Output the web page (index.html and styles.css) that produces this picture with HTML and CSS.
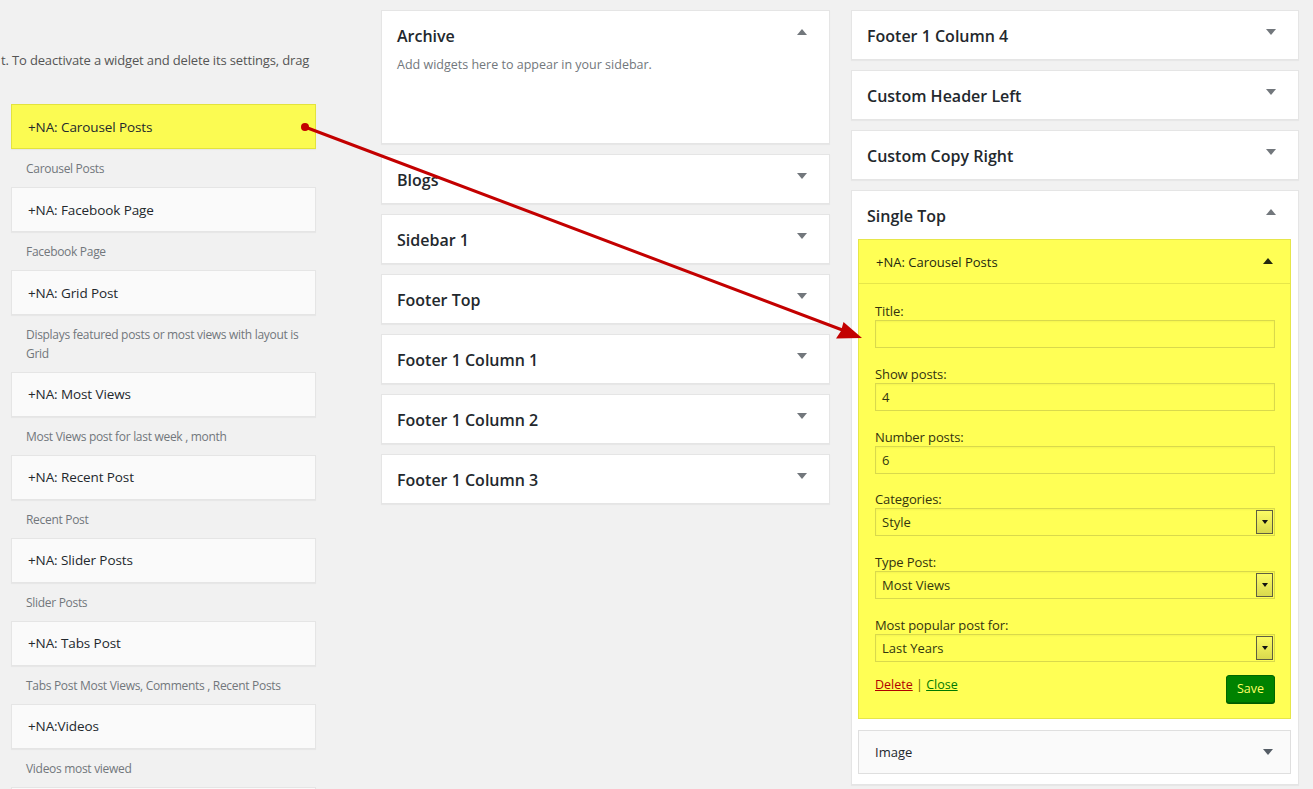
FILE: index.html
```html
<!DOCTYPE html>
<html lang="en">
<head>
<meta charset="utf-8">
<title>Widgets</title>
<link rel="stylesheet" href="styles.css">
</head>
<body>
<div class="page">
  <div class="col-left">
    <p class="intro">t. To deactivate a widget and delete its settings, drag</p>
    <div class="widget-list">
      <div class="avail highlight"><span class="avail-title">+NA: Carousel Posts</span></div>
      <p class="avail-desc">Carousel Posts</p>
      <div class="avail"><span class="avail-title">+NA: Facebook Page</span></div>
      <p class="avail-desc">Facebook Page</p>
      <div class="avail"><span class="avail-title">+NA: Grid Post</span></div>
      <p class="avail-desc">Displays featured posts or most views with layout is Grid</p>
      <div class="avail"><span class="avail-title">+NA: Most Views</span></div>
      <p class="avail-desc">Most Views post for last week , month</p>
      <div class="avail"><span class="avail-title">+NA: Recent Post</span></div>
      <p class="avail-desc">Recent Post</p>
      <div class="avail"><span class="avail-title">+NA: Slider Posts</span></div>
      <p class="avail-desc">Slider Posts</p>
      <div class="avail"><span class="avail-title">+NA: Tabs Post</span></div>
      <p class="avail-desc">Tabs Post Most Views, Comments , Recent Posts</p>
      <div class="avail"><span class="avail-title">+NA:Videos</span></div>
      <p class="avail-desc">Videos most viewed</p>
      <div class="avail"></div>
    </div>
  </div>

  <div class="col-mid">
    <div class="sidebar sidebar-open archive">
      <div class="sb-head"><h2>Archive</h2><span class="tri up"></span></div>
      <p class="sb-desc">Add widgets here to appear in your sidebar.</p>
    </div>
    <div class="sidebar"><div class="sb-head"><h2>Blogs</h2><span class="tri down"></span></div></div>
    <div class="sidebar"><div class="sb-head"><h2>Sidebar 1</h2><span class="tri down"></span></div></div>
    <div class="sidebar"><div class="sb-head"><h2>Footer Top</h2><span class="tri down"></span></div></div>
    <div class="sidebar"><div class="sb-head"><h2>Footer 1 Column 1</h2><span class="tri down"></span></div></div>
    <div class="sidebar"><div class="sb-head"><h2>Footer 1 Column 2</h2><span class="tri down"></span></div></div>
    <div class="sidebar"><div class="sb-head"><h2>Footer 1 Column 3</h2><span class="tri down"></span></div></div>
  </div>

  <div class="col-right">
    <div class="sidebar"><div class="sb-head"><h2>Footer 1 Column 4</h2><span class="tri down"></span></div></div>
    <div class="sidebar"><div class="sb-head"><h2>Custom Header Left</h2><span class="tri down"></span></div></div>
    <div class="sidebar"><div class="sb-head"><h2>Custom Copy Right</h2><span class="tri down"></span></div></div>
    <div class="sidebar single-top">
      <div class="sb-head"><h2>Single Top</h2><span class="tri up"></span></div>
      <div class="widget-open">
        <div class="wo-head"><span class="wo-title">+NA: Carousel Posts</span><span class="tri up dark"></span></div>
        <div class="wo-body">
          <div class="field">
            <label class="f-label">Title:</label>
            <div class="f-input"></div>
          </div>
          <div class="field">
            <label class="f-label">Show posts:</label>
            <div class="f-input">4</div>
          </div>
          <div class="field">
            <label class="f-label">Number posts:</label>
            <div class="f-input">6</div>
          </div>
          <div class="field">
            <label class="f-label">Categories:</label>
            <div class="f-input f-select">Style<span class="sel-btn"><span class="sel-tri"></span></span></div>
          </div>
          <div class="field">
            <label class="f-label">Type Post:</label>
            <div class="f-input f-select">Most Views<span class="sel-btn"><span class="sel-tri"></span></span></div>
          </div>
          <div class="field field-last">
            <label class="f-label">Most popular post for:</label>
            <div class="f-input f-select">Last Years<span class="sel-btn"><span class="sel-tri"></span></span></div>
          </div>
          <div class="controls">
            <div class="links"><a class="del" href="#">Delete</a> <span class="sep">|</span> <a class="close" href="#">Close</a></div>
            <span class="save">Save</span>
          </div>
        </div>
      </div>
      <div class="widget-closed"><span class="wc-title">Image</span><span class="tri down"></span></div>
    </div>
  </div>
</div>

<svg class="pointer" width="1313" height="789" viewBox="0 0 1313 789" aria-hidden="true">
  <line x1="305" y1="127" x2="845" y2="331" stroke="#c30000" stroke-width="3" stroke-linecap="round"/>
  <circle cx="305" cy="127" r="4" fill="#c30000"/>
  <polygon points="862,338 836,338.5 841,331 843.5,322" fill="#c30000"/>
</svg>
</body>
</html>
```

FILE: styles.css
```css
* { box-sizing: border-box; }

html, body {
  margin: 0;
  padding: 0;
  background: #f1f1f1;
  font-family: "Open Sans", "Noto Sans", sans-serif;
  color: #23282d;
  overflow: hidden;
}

.page {
  display: flex;
  align-items: flex-start;
  padding-top: 10px;
  height: 789px;
  overflow: hidden;
}

/* ---------- left column ---------- */
.col-left {
  width: 316px;
  flex: none;
}

.intro {
  margin: 41px 0 0 1px;
  font-size: 13px;
  line-height: 18px;
  color: #555;
  white-space: nowrap;
  letter-spacing: -0.15px;
}

.widget-list {
  margin: 35px 0 0 11px;
}

.avail {
  height: 45px;
  background: #fafafa;
  border: 1px solid #e5e5e5;
  box-shadow: 0 1px 1px rgba(0,0,0,.04);
  padding: 0 16px;
  display: flex;
  align-items: center;
}

.avail.highlight {
  background: #fbfb52;
  border-color: #e3e33c;
}

.avail-title {
  font-size: 13.5px;
  font-weight: 500;
  color: #23282d;
  letter-spacing: -0.1px;
}

.avail-desc {
  margin: 0;
  padding: 11px 6px 8.5px 15px;
  font-size: 12px;
  line-height: 18.5px;
  color: #72777c;
  letter-spacing: -0.3px;
}

/* ---------- sidebars ---------- */
.col-mid {
  width: 449px;
  flex: none;
  margin-left: 65px;
  display: flex;
  flex-direction: column;
  gap: 10px;
}

.col-right {
  width: 448px;
  flex: none;
  margin-left: 21px;
  display: flex;
  flex-direction: column;
  gap: 10px;
}

.sidebar {
  background: #fff;
  border: 1px solid #e5e5e5;
  box-shadow: 0 1px 1px rgba(0,0,0,.04);
}

.sb-head {
  height: 48px;
  padding: 15px 22px 0 15px;
  display: flex;
  justify-content: space-between;
  align-items: flex-start;
}

.sb-head h2 {
  margin: 0;
  font-size: 16px;
  line-height: 20px;
  font-weight: 600;
  color: #23282d;
}

.archive {
  height: 134px;
}

.archive .sb-head {
  height: auto;
}

.sb-desc {
  margin: 10px 0 0 15px;
  font-size: 12.5px;
  line-height: 18px;
  color: #72777c;
}

.tri {
  width: 0;
  height: 0;
  border-left: 5px solid transparent;
  border-right: 5px solid transparent;
  margin-top: 3px;
}

.tri.down {
  border-top: 6px solid #72777c;
}

.tri.up {
  border-bottom: 6px solid #72777c;
}

.tri.dark.up {
  border-bottom-color: #23280f;
}

/* ---------- opened widget (highlighted) ---------- */
.single-top {
  padding-bottom: 10px;
}

.widget-open {
  margin: 0 7px 0 6px;
  background: #ffff55;
  border: 1px solid #e6e64a;
}

.wo-head {
  height: 44px;
  padding: 0 17px 0 17px;
  display: flex;
  align-items: center;
  justify-content: space-between;
  border-bottom: 1px solid #e6e64a;
}

.wo-head .tri {
  margin-top: -2px;
}

.wo-title {
  font-size: 13px;
  font-weight: 500;
  color: #23280f;
}

.wo-body {
  padding: 18px 15px 15px 16px;
}

.field {
  margin-bottom: 16.8px;
}

.field.field-last {
  margin-bottom: 13px;
}

.f-label {
  display: block;
  font-size: 13px;
  line-height: 18px;
  color: #33330f;
  letter-spacing: -0.1px;
}

.f-input {
  position: relative;
  height: 28px;
  border: 1px solid #d9d94c;
  background: #ffff55;
  box-shadow: inset 0 1px 2px rgba(100,100,0,.07);
  padding: 0 6px;
  font-size: 13px;
  line-height: 26px;
  color: #32370f;
}

.sel-btn {
  position: absolute;
  right: 1px;
  top: 1px;
  width: 17px;
  height: 24px;
  border: 1px solid #5e5e40;
  background: linear-gradient(#fbfb64, #d9d94e);
  display: flex;
  align-items: center;
  justify-content: center;
}

.sel-tri {
  width: 0;
  height: 0;
  border-left: 3.5px solid transparent;
  border-right: 3.5px solid transparent;
  border-top: 4px solid #111;
}

.controls {
  display: flex;
  justify-content: space-between;
  align-items: flex-start;
}

.links {
  font-size: 12.5px;
  line-height: 20px;
  color: #666600;
}

.links a.del {
  color: #b00000;
}

.links a.close {
  color: #007a00;
}

.save {
  width: 49px;
  height: 28px;
  background: #008200;
  border: 1px solid #006600;
  border-radius: 3px;
  box-shadow: 0 1px 0 #005a00;
  color: #ffff66;
  font-size: 12.5px;
  line-height: 26px;
  text-align: center;
}

.widget-closed {
  margin: 11px 7px 0 6px;
  height: 44px;
  background: #fafafa;
  border: 1px solid #dfdfdf;
  padding: 0 17px 0 16px;
  display: flex;
  align-items: center;
  justify-content: space-between;
}

.widget-closed .tri {
  margin-top: 0;
  border-top-color: #555d66;
}

.wc-title {
  font-size: 13px;
  font-weight: 500;
  color: #23282d;
}

/* ---------- overlay pointer ---------- */
.pointer {
  position: absolute;
  left: 0;
  top: 0;
  pointer-events: none;
}
```
